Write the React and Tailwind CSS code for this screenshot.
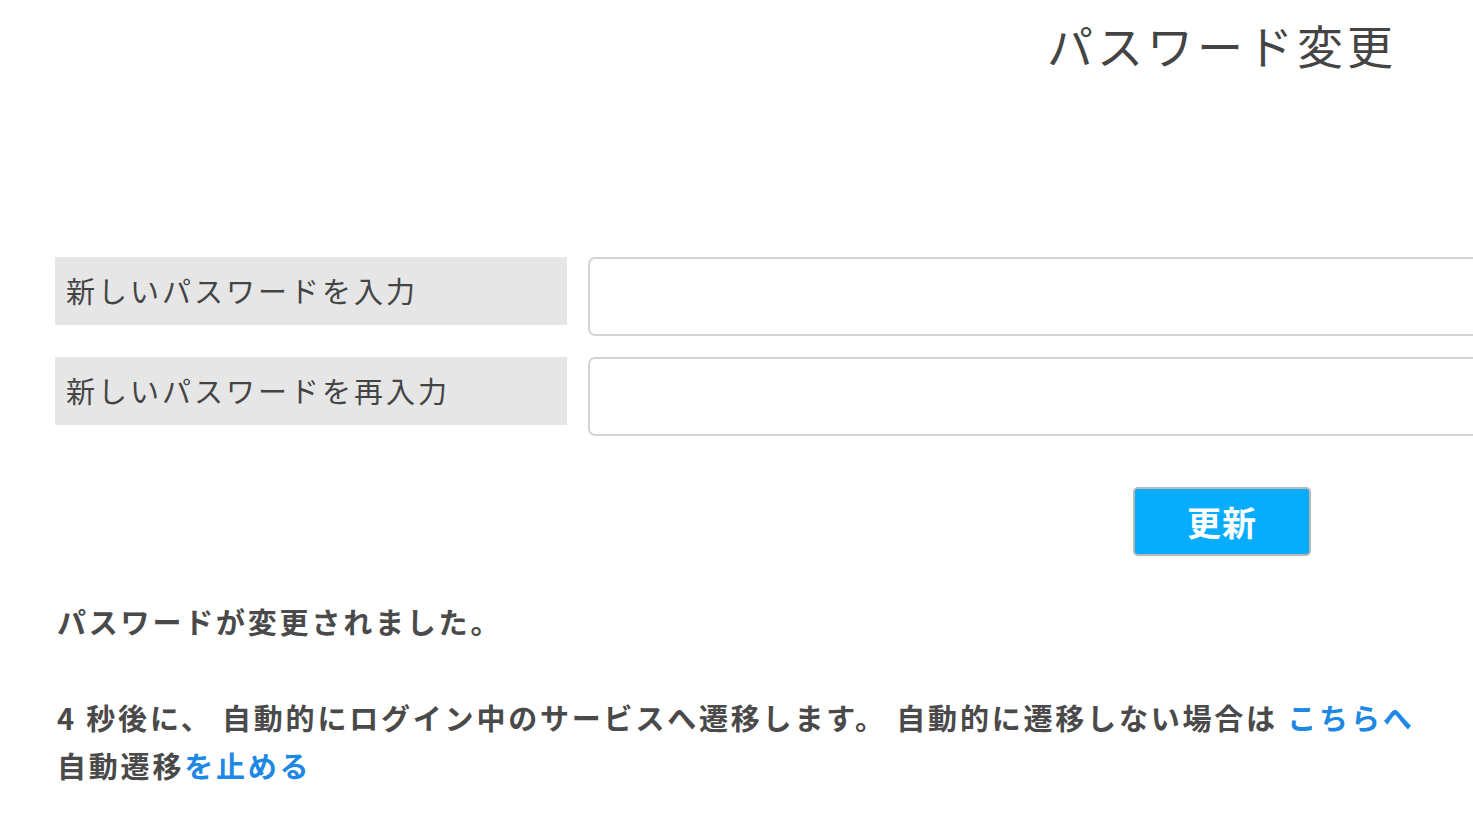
export default function App() {
  const font = { fontFamily: '"Noto Sans CJK JP", "Noto Sans", sans-serif' };
  return (
    <div className="w-[1473px] h-[830px] overflow-hidden bg-white text-[#444]" style={font}>
      <div className="flex justify-end pr-[76px] pt-[14px]">
        <h1 className="text-[46px] leading-[60px] tracking-[4px] font-normal text-[#444]">パスワード変更</h1>
      </div>
      <div className="mt-[183px] pl-[55px] flex flex-col gap-[21px]">
        <div className="flex items-start gap-[21px]">
          <div className="w-[512px] shrink-0 h-[68px] bg-[#e6e6e6] flex items-center pl-[11px] text-[29px] tracking-[3px] text-[#444]">新しいパスワードを入力</div>
          <input type="password" className="w-[1000px] shrink-0 h-[79px] border-2 border-[#d4d4d4] rounded-[7px] bg-white" />
        </div>
        <div className="flex items-start gap-[21px]">
          <div className="w-[512px] shrink-0 h-[68px] bg-[#e6e6e6] flex items-center pl-[11px] text-[29px] tracking-[3px] text-[#444]">新しいパスワードを再入力</div>
          <input type="password" className="w-[1000px] shrink-0 h-[79px] border-2 border-[#d4d4d4] rounded-[7px] bg-white" />
        </div>
      </div>
      <div className="pl-[1133px] mt-[51px]">
        <button className="w-[178px] h-[69px] bg-[#08acfc] border-2 border-[#b8b8b8] rounded-[5px] text-white text-[34px] font-bold tracking-[1px] flex items-center justify-center">更新</button>
      </div>
      <div className="pl-[57px] mt-[41px] text-[29px] font-bold text-[#4a4a4a] tracking-[2.8px]">
        <p className="leading-[48px]">パスワードが変更されました。</p>
        <p className="leading-[48px] mt-[48px]">4 秒後に、 自動的にログイン中のサービスへ遷移します。 自動的に遷移しない場合は <a className="text-[#1e88e5] cursor-pointer">こちらへ</a></p>
        <p className="leading-[48px]">自動遷移<a className="text-[#1e88e5] cursor-pointer">を止める</a></p>
      </div>
    </div>
  );
}
